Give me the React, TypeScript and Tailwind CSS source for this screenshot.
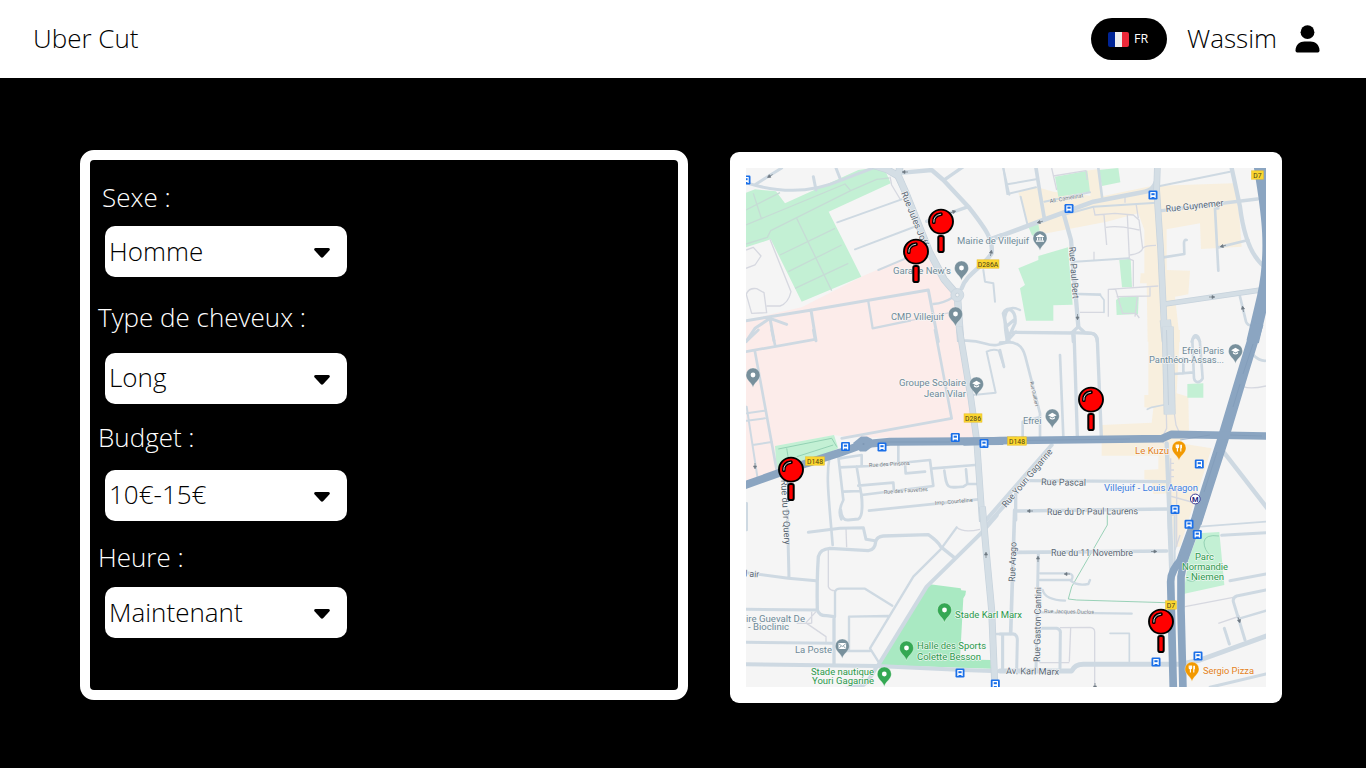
import React from "react";

type Road = [width: number, d: string];

interface Tile {
  x: number;
  y: number;
  beige?: string[];
  pink?: string[];
  green?: string[];
  paths?: string;
  lanes?: string;
  roads: Road[];
  main?: Road[];
  highway?: Road[];
}

// The map is drawn from six tiles, each one at three units to the pixel.
const tiles: Tile[] = [
  {
    x: 730,
    y: 150,
    pink: ["215,472 394,380 590,295 640,400 690,450 700,600 735,866 360,862 312,855 135,888 140,960 48,996 48,510"],
    green: ["48,128 75,118 138,124 165,160 385,60 430,54 465,60 482,100 296,185 394,380 215,455 122,268 48,292"],
    paths:
      "M48,225 L345,102 L362,122 L122,242 L112,262 L48,282 M70,130 L95,208 M48,180 L150,128 M200,205 L305,422 M150,315 L315,235 M175,365 L335,285 M195,415 L355,340 M362,122 L440,88 L478,84",
    lanes:
      "M48,300 L70,292 L93,318 L75,345 L48,355 M120,268 L183,425 Q175,460 150,468 L110,468 M48,435 Q55,412 80,416 L102,428 L110,488 L65,490 L48,430 M480,80 L485,105 L512,150 M495,80 L518,125 M540,512 L660,488",
    roads: [
      [9, "M75,104 L155,54 M48,98 C130,124 230,135 330,92 L440,50 M250,80 L258,120 M318,54 L332,90"],
      [13, "M520,68 L605,60 L640,90 L715,170 C770,240 790,270 785,310 C760,350 710,370 695,415"],
      [10, "M645,88 L700,50 M715,170 L590,214"],
      [6, "M560,228 L375,298 M515,148 L322,217 M445,360 L540,320 M785,262 L815,252 M760,360 L765,395 L790,400 L795,455 M820,54 L838,134"],
      [9, "M48,512 L245,480 L595,420 L625,575 M243,480 L258,572 M48,575 L75,535 L120,505 L132,572 M120,505 L170,523"],
      [7, "M415,455 L428,535 L540,512 M610,462 Q640,460 672,440 M870,480 C830,460 815,490 830,570"],
    ],
    main: [[22, "M430,46 L470,58 L505,78 L528,130 L598,305 L642,388 L682,435 L692,575 M505,78 L510,48"]],
  },
  {
    x: 1000,
    y: 150,
    beige: [
      "55,128 108,110 160,125 300,140 455,108 700,100 715,160 725,290 603,297 600,220 500,238 500,360 570,362 565,433 525,440 540,575 443,575 440,400 420,400 422,370 433,370 433,240 415,190 320,215 125,253 110,235 85,220",
      "255,62 295,58 305,145 275,150",
    ],
    green: [
      "165,80 262,62 270,125 175,140",
      "295,60 355,54 361,97 306,108",
      "85,230 115,222 120,250 112,262 96,256",
      "204,292 218,464 160,466 160,512 78,512 60,415 75,405 55,355 115,330 115,318",
      "358,330 392,326 396,412 366,412",
      "348,450 360,442 416,440 414,492 350,495",
    ],
    lanes:
      "M155,54 L170,120 M160,78 L258,62 L262,90 M280,170 L285,195 L345,190 L400,195 L417,210 L428,295 Q425,310 390,315 M312,195 L320,285 M382,195 L388,325 M318,232 C360,225 390,235 418,240 M408,160 L415,205 M428,295 Q435,286 468,286 M375,140 V158 M385,325 L400,332 V410 M325,500 V418 L475,408 M346,415 L368,490 L408,490 L418,504 M350,440 L450,438 V412 M412,440 L405,500 M282,305 V330 M240,487 H312",
    roads: [
      [11, "M108,54 L120,130 L133,205"],
      [6, "M10,54 L22,132 L108,112 M22,103 L108,88 M62,140 L82,222 M133,155 L270,127 M225,335 L385,325 M480,108 L690,65 M190,195 L280,170 L470,158"],
      [8, "M295,54 L307,148 M655,175 L645,175 L655,362 M655,292 L745,270 M490,322 L553,312 L552,280 Q552,268 560,270 M720,440 L738,515 Q742,527 757,527 M235,432 L300,434 M575,575 Q585,548 600,575"],
      [14, "M-10,262 L130,210 L280,155 L435,125 Q460,120 468,95"],
      [13, "M695,54 L720,170 C735,290 770,330 790,347 M192,195 L213,270 L235,530"],
      [10, "M485,182 L772,147 M20,575 L45,520 C50,480 20,465 10,490 L25,560 M18,530 L42,510 M38,547 L215,549 L235,530 L255,548 L275,550 Q290,552 292,575 M218,548 L220,575"],
      [5, "M300,434 L312,450 V487"],
    ],
    main: [
      [20, "M472,54 L470,120 L482,300 L492,515"],
      [34, "M496,510 L502,575"],
      [16, "M495,462 L782,420"],
    ],
    highway: [[38, "M779,40 C795,150 825,280 790,440 L758,575"]],
  },
  {
    x: 730,
    y: 330,
    green: ["135,348 312,315 325,355 230,400 200,420 140,420"],
    roads: [
      [8, "M48,65 L255,28 L250,0 M48,35 L85,0 M125,0 L135,45 M75,65 L140,420 M615,0 L665,265 L335,325"],
      [6, "M50,250 L105,242 M50,272 L105,265 M68,345 L125,336 M50,230 L82,440 M770,65 L797,188 L730,195 M770,65 Q790,55 806,62 L822,112"],
      [8, "M705,32 C760,30 770,50 800,45 L840,35"],
      [8, "M298,385 C288,440 296,500 308,645 M330,385 L395,375 V405 M325,380 L340,510 Q322,545 334,568 M380,410 L395,500 M330,412 L420,408 L600,390 L610,468 L395,495 M385,467 L490,458 L492,485 M340,485 L390,483 M505,345 V395 M525,400 L527,430 L585,425 M610,415 L735,405 M643,422 C650,475 650,475 700,470 L712,462 L708,418 M712,462 H740 M417,542 L745,508 M50,520 V600"],
      [12, "M775,580 L840,508"],
    ],
    main: [[20, "M687,-10 L722,200 L740,330 L757,575"]],
    highway: [[24, "M40,467 L230,400 L330,368 L400,343 L480,335 L820,333"]],
  },
  {
    x: 1000,
    y: 330,
    beige: [
      "445,0 540,0 530,190 565,200 567,300 540,340 635,355 540,650 522,650 510,490 460,492 455,450 433,448 433,420 475,418 475,377 305,377 305,285 455,278 460,235 433,232 433,195 445,195",
    ],
    green: ["562,162 610,160 610,203 562,203"],
    lanes:
      "M730,170 C750,178 780,172 798,168 M499,250 L500,295 L490,315 V340 M523,250 L528,285 L537,305 M510,498 L575,516 M512,385 V650 M530,470 V650 M512,400 h10 M512,420 h10 M512,440 h10 M515,540 h14 M515,555 h14",
    roads: [
      [10, "M222,5 L232,320 M215,8 L275,10 Q290,12 292,30 L304,320"],
      [8, "M0,38 C50,30 68,48 76,80 L120,250 V320 M0,60 L12,110 M48,5 L18,38 M180,75 L190,320 M68,320 V275 L118,262 M577,30 C580,10 597,10 600,40 L608,145 C600,160 585,160 582,145 Z M522,132 L580,127 M550,85 V130 M760,75 Q780,95 800,92"],
      [5, "M442,238 L455,232 L490,225"],
      [12, "M155,345 L-40,568"],
      [10, "M85,452 L500,455 M50,543 L500,537 M47,490 V570"],
      [13, "M670,365 L802,535 M500,340 L510,600"],
    ],
    main: [[36, "M503,-10 L509,253"]],
    highway: [
      [34, "M774,-20 L728,130 L668,330 L588,580"],
      [23, "M-110,336 L0,332 L485,326 L515,313 L802,318"],
    ],
  },
  {
    x: 730,
    y: 510,
    green: [],
    lanes:
      "M295,115 V230 Q300,242 315,242 M348,55 L350,112 M680,52 Q700,70 750,58 M230,340 L288,380 V400 M245,305 V340 M228,338 L258,305 M200,340 H245",
    roads: [
      [9, "M235,67 L330,55 L400,53 L408,88 L435,92 M332,0 Q335,32 355,30 L385,27 Q400,20 395,-40 M50,188 L175,205 L258,212 M172,0 L177,205 M48,298 L262,300 M48,397 L312,400"],
      [10, "M262,300 Q260,212 265,140 Q270,117 300,115 L415,122 Q435,120 437,95 Q440,80 460,78 L595,74 Q625,95 632,110 L672,142 M262,300 Q268,318 290,317 L312,320 V465"],
      [7, "M680,52 L632,118 L550,200 L420,415 L445,455 M345,423 L420,423 M357,420 V320 L475,318 M315,320 V245 Q318,236 330,236 L405,236 L487,287"],
      [12, "M48,463 L440,468 L700,480 L785,483 M800,16 L755,68 L590,230 L445,465 M440,470 Q415,515 400,525 L330,540"],
      [8, "M800,372 H855 M818,375 V480"],
    ],
    main: [[21, "M757,-10 L770,140 L785,300 L795,540"]],
  },
  {
    x: 1000,
    y: 510,
    green: ["595,70 658,66 673,225 550,252 555,220 565,150"],
    lanes: "M555,290 L700,262 M180,353 L270,352 Q284,354 284,365 V535 M212,355 L208,455 M118,458 H208 M540,75 L525,120 M655,340 L720,318",
    roads: [
      [9, "M0,372 L40,372 Q52,375 52,390 L50,480 M8,372 V480 M115,130 L108,480 M122,355 L170,355 Q183,358 181,370 L180,475 M798,240 L710,258 Q698,262 700,275 L735,390 M665,76 L798,68 M690,212 L798,192 M673,355 L688,402 M630,532 L798,492"],
      [11, "M44,0 L32,370 M50,127 L500,123"],
      [7, "M120,190 H205 Q222,192 216,207 L212,212 Q230,228 265,222 L270,210 M120,210 H215 M128,240 Q135,270 195,272 M115,307 L395,311 M720,325 L798,302"],
      [5, "M330,370 H388 V455 M600,50 L798,35"],
      [15, "M0,483 L215,483 Q225,463 250,463 L540,463 L600,450 L798,378 M508,0 L515,190"],
      [6, "M524,20 V190"],
    ],
    highway: [
      [34, "M604,-20 L590,30 L545,155"],
      [23, "M548,145 Q512,180 512,215 L520,540"],
      [23, "M556,130 L543,200 L543,300 L549,540"],
    ],
  },
];

type Label = [x: number, y: number, width: number, text: string, color: string, rotate?: number, size?: number];

const slate = "#6f8a98";
const street = "#5b6874";
const park = "#2c9a4c";
const food = "#e5821c";

const labels: Label[] = [
  [957, 244, 72, "Mairie de Villejuif", slate],
  [893, 274, 58, "Garage New's", slate],
  [891, 320, 53, "CMP Villejuif", slate],
  [899, 386, 67, "Groupe Scolaire", slate],
  [924, 397, 42, "Jean Vilar", slate],
  [1023, 424, 18.5, "Efrei", slate],
  [1182, 354, 42, "Efrei Paris", slate],
  [1149, 363, 75, "Panthéon-Assas...", slate],
  [746, 622, 59, "ire Guevalt De", slate],
  [748, 630, 41, "- Bioclinic", slate],
  [795, 653, 37, "La Poste", slate],
  [955, 618, 67, "Stade Karl Marx", park],
  [917, 649, 69, "Halle des Sports", park],
  [917, 660, 64, "Colette Besson", park],
  [811, 675, 63, "Stade nautique", park],
  [812, 684, 62, "Youri Gagarine", park],
  [1195, 560, 19, "Parc", park],
  [1182, 570, 46, "Normandie", park],
  [1186, 580, 38, "- Niemen", park],
  [1135, 454, 34, "Le Kuzu", food],
  [1203, 674, 51, "Sergio Pizza", food],
  [1104, 491, 94, "Villejuif - Louis Aragon", "#3d7de0"],
  [1166, 212, 58, "Rue Guynemer", street, -6],
  [1041, 485, 45, "Rue Pascal", street, 1],
  [1047, 515, 91, "Rue du Dr Paul Laurens", street, -0.5],
  [1051, 556, 82, "Rue du 11 Novembre", street],
  [1006, 674, 53, "Av. Karl Marx", street, 1],
  [745, 576.5, 14, "l air", street, 4],
  [1069, 247, 52, "Rue Paul Bert", street, 86],
  [901, 193, 58, "Rue Jules Joff", street, 68],
  [781, 480, 65, "Rue du Dr Query", street, 87],
  [1006, 508, 73, "Rue Youri Gagarine", street, -50],
  [1015, 582, 40, "Rue Arago", street, -88],
  [1040, 662, 75, "Rue Gaston Cantini", street, -89],
  [1050, 203, 34, "All. Camelinat", "#6c757d", -10, 5.5],
  [869, 467, 41, "Rue des Pinsons", "#6c757d", -3, 5.5],
  [884, 494, 44, "Rue des Fauvettes", "#6c757d", -4, 5.5],
  [935, 505, 38, "Imp. Courteline", "#6c757d", -5, 5.5],
  [1044, 613, 50, "Rue Jacques Duclos", "#6c757d", 1, 5.5],
  [1030, 382, 25, "Rue Guilbert", "#6c757d", 78, 5],
];

const shields: [number, number, number, string][] = [
  [988, 264, 22, "D286A"],
  [973, 418, 18, "D286"],
  [815, 461, 19, "D148"],
  [1017, 441, 19, "D148"],
  [1257.5, 175, 12, "D7"],
  [1171, 605, 11, "D7"],
];

const stops: [number, number][] = [
  [746, 180], [1069, 208.500], [1153, 195], [845.500, 446.500], [882, 447], [955.300, 437.500],
  [984, 443.500], [1199.300, 464], [1175, 509.500], [1189, 524.300], [1197.300, 534.500], [1156, 662],
  [1198, 656], [960, 673], [995.300, 684],
];

type Kind = "dot" | "school" | "museum" | "mail" | "food";

const places: [number, number, string, Kind][] = [
  [1040, 239, "#78909c", "museum"],
  [961.5, 269, "#78909c", "dot"],
  [955.5, 315, "#78909c", "dot"],
  [976.5, 385, "#78909c", "school"],
  [1052.3, 417, "#78909c", "school"],
  [1235.5, 352, "#78909c", "school"],
  [753, 376, "#78909c", "dot"],
  [842.3, 647, "#78909c", "mail"],
  [944.5, 611, "#34a853", "dot"],
  [906.5, 649, "#34a853", "dot"],
  [884.3, 675, "#34a853", "dot"],
  [1179, 449, "#f29900", "food"],
  [1192, 670, "#f29900", "food"],
];

const barbers: [number, number][] = [[941, 222], [916, 252], [1091, 400], [791, 470], [1161, 622]];

const arrows: [number, number, number][] = [
  [770, 176, 150], [905, 172, 180], [953, 212, -20], [991, 253, -80], [1040, 222, 165],
  [1223, 246, 165], [1212, 297, 0], [1243, 309, -100], [1077.5, 317, 90], [1030, 511, 180],
  [1154, 551.5, 0], [1038, 559, -90], [1067, 574, 180], [986, 555, -90], [755, 466, 90],
  [1239, 620, 70], [1095, 686, 90],
];

function PlaceGlyph({ kind }: { kind: Kind }) {
  if (kind === "school")
    return <path d="M0,-3.2 L4.3,-0.8 L0,1.6 L-4.3,-0.8 Z M-2.6,1 V2.6 Q0,4.4 2.6,2.6 V1 L0,2.5 Z" fill="#fff" />;
  if (kind === "museum")
    return <path d="M-4,-1.8 L0,-4 L4,-1.8 V-1 H-4 Z M-3,-0.4 h1.2 V2.2 H-3 Z M-.6,-.4 h1.2 V2.2 H-.6 Z M1.8,-.4 H3 V2.2 H1.8 Z M-4,2.6 H4 V3.8 H-4 Z" fill="#fff" />;
  if (kind === "mail")
    return (
      <g>
        <rect x="-3.800" y="-2.900" width="7.600" height="5.800" rx=".4" fill="#fff" />
        <path d="M-3.500,-2.300 L0,.5 L3.500,-2.300 M-3.400,2.500 L-1.200,0 M3.400,2.500 L1.200,0" fill="none" stroke="#78909c" strokeWidth=".8" />
      </g>
    );
  if (kind === "food")
    return <path d="M-2.8,-3.6 V-1.2 Q-2.8,0 -1.6,0 V3.6 M-.4,-3.6 V-1.2 Q-.4,0 -1.6,0 V-3.6 M1.8,3.6 V-3.2 M2.4,-3.2 V.2" fill="none" stroke="#fff" strokeWidth="1.1" />;
  return <circle r="2.4" fill="#fff" />;
}

function CityMap() {
  const at = (t: Tile) => `translate(${t.x} ${t.y}) scale(0.33333)`;
  return (
    <svg
      viewBox="746 168 520 519"
      className="block h-[519px] w-[520px] bg-[#f5f5f5] font-normal"
      fontFamily='Roboto, "Open Sans", sans-serif'
    >
      {tiles.map((t, i) => (
        <g key={i} transform={at(t)}>
          {t.pink?.map((p) => <polygon key={p} points={p} fill="#fcecea" />)}
          {t.beige?.map((p) => <polygon key={p} points={p} fill="#f8efde" />)}
        </g>
      ))}
      {tiles.map((t, i) => (
        <g key={i} transform={at(t)} fill="none" strokeLinejoin="round">
          {t.green?.map((p) => <polygon key={p} points={p} fill="#c3f0d4" />)}
          {t.paths && <path d={t.paths} stroke="#c6dcd5" strokeWidth="4" />}
          {t.lanes && <path d={t.lanes} stroke="#d6d8e0" strokeWidth="4" />}
        </g>
      ))}
      <g transform="translate(730 510) scale(0.33333)">
        <polygon points="590,230 600,223 692,235 694,241 708,242 706,255 700,265 690,448 782,450 783,476 450,465" fill="#a9e9c2" />
      </g>
      <g fill="none" stroke="#8fcdb0" strokeWidth=".9">
        <path d="M1107.300,510 V525 L1071.700,586.700 L1068.300,599 L1076.700,600 L1166.700,602.700" />
        <path d="M778.300,449 L831.700,438.300 L836.700,446.700 M786.700,448.300 L788.300,458.300 M796.700,456.700 L833.300,445" />
        <path d="M1219,536 Q1205,534 1204,542 Q1204,550 1211,556 M1187,580 Q1194,584 1199,576" />
      </g>
      {tiles.map((t, i) => (
        <g key={i} transform={at(t)} fill="none" stroke="#ced9e2" strokeLinejoin="round" strokeLinecap="round">
          {t.roads.map(([w, d]) => <path key={d} d={d} strokeWidth={w} />)}
        </g>
      ))}
      {tiles.map((t, i) => (
        <g key={i} transform={at(t)} fill="none" strokeLinejoin="round">
          {t.main?.map(([w, d]) => <path key={d} d={d} strokeWidth={w} stroke="#c6d2dc" />)}
          {t.main?.map(([w, d]) => <path key={d} d={d} strokeWidth={w - 4} stroke="#d4dee5" />)}
        </g>
      ))}
      <circle cx="957.300" cy="295" r="6.500" fill="#d4dee5" stroke="#c6d2dc" strokeWidth=".7" />
      <circle cx="957.300" cy="295" r="1.800" fill="#eef1f3" stroke="#c0cbd5" strokeWidth=".7" />
      <path d="M1166.500,330 L1168.500,405" fill="none" stroke="#bdcad5" strokeWidth=".7" />
      {tiles.map((t, i) => (
        <g key={i} transform={at(t)} fill="none" strokeLinejoin="round">
          {t.highway?.map(([w, d]) => <path key={d} d={d} strokeWidth={w} stroke="#8ba5c1" />)}
        </g>
      ))}
      <path d="M853,443 L861,436.500 H867 L872,439 L872,447 L866,451.500 H860 Z" fill="#8ba5c1" />
      <circle cx="863.500" cy="444" r="1" fill="#7d98b5" />
      <path
        d="M1253,344 L1243,374 M1240,384 L1233,407 M1217,452 L1204,492 M880,442 H950 M1020,440.500 L1130,439 M1180,440 L1210,435 M1230,435 L1262,436"
        fill="none"
        stroke="#7d99b7"
        strokeWidth=".6"
      />
      {arrows.map(([x, y, a], i) => (
        <path
          key={i}
          transform={`translate(${x} ${y}) rotate(${a})`}
          d="M-3,0 H1 M0,-1.500 L2.800,0 L0,1.500 Z"
          fill="#6d7882"
          stroke="#6d7882"
          strokeWidth=".7"
        />
      ))}
      {labels.map(([x, y, w, text, color, rotate = 0, size = 9.2]) => (
        <text
          key={text + y}
          transform={`translate(${x} ${y}) rotate(${rotate})`}
          fontSize={size}
          textLength={w}
          lengthAdjust="spacingAndGlyphs"
          fill={color}
          stroke="#f7f8f8"
          strokeOpacity=".85"
          strokeWidth={size < 6 ? 0.9 : 1.4}
          strokeLinejoin="round"
          paintOrder="stroke"
        >
          {text}
        </text>
      ))}
      {shields.map(([x, y, w, text]) => (
        <g key={`${x}-${y}`}>
          <rect x={x - w / 2} y={y - 4.2} width={w} height="8.400" fill="#fbd62f" stroke="#e6bd2c" strokeWidth=".5" />
          <text x={x} y={y + 2.5} fontSize="6.800" textAnchor="middle" fill="#4b4015">{text}</text>
        </g>
      ))}
      {stops.map(([x, y]) => (
        <g key={`${x}-${y}`} transform={`translate(${x} ${y})`}>
          <rect x="-4.500" y="-4.500" width="9" height="9" rx="1.200" fill="#1a6fe8" />
          <path d="M-2.700,-2.900 H2.700 V2.900 H1.500 V2 H-1.500 V2.900 H-2.700 Z" fill="#fff" />
          <rect x="-1.600" y="-1.800" width="3.200" height="2" fill="#1a6fe8" />
        </g>
      ))}
      {places.map(([x, y, color, kind]) => (
        <g key={`${x}-${y}`} transform={`translate(${x} ${y})`}>
          <path
            d="M0,11.500 C-1,6.500 -7,4.500 -7,-1 A7,7 0 0 1 7,-1 C7,4.500 1,6.500 0,11.500 Z"
            fill={color}
            stroke="#fff"
            strokeOpacity=".6"
            strokeWidth=".5"
          />
          <g transform="translate(0 -1)"><PlaceGlyph kind={kind} /></g>
        </g>
      ))}
      <circle cx="1195.300" cy="499" r="4.900" fill="#fff" stroke="#3b3b94" strokeWidth="1" />
      <text x="1195.300" y="501.600" fontSize="7.500" fontWeight="700" textAnchor="middle" fill="#27277f">M</text>
      {barbers.map(([x, y]) => (
        <g key={`${x}-${y}`} transform={`translate(${x} ${y})`} stroke="#000">
          <rect x="-2.700" y="14" width="5.400" height="16" rx="1.800" fill="#f00" strokeWidth="2" />
          <circle cy="-.4" r="12" fill="#f00" strokeWidth="1.900" />
          <path d="M-7.200,.3 Q-7.800,-7 0,-7.900" fill="none" strokeWidth="3.600" strokeLinecap="round" />
          <path d="M-7.200,.1 Q-7.600,-6.800 -.3,-7.800" fill="none" stroke="#eee" strokeWidth=".9" strokeLinecap="round" />
        </g>
      ))}
    </svg>
  );
}

function Select({ value, valueClass }: { value: string; valueClass: string }) {
  return (
    <button className="flex h-[51px] w-[242px] items-center justify-between rounded-[10px] bg-white pr-[17px] pb-px pl-[4px] text-[26px] leading-[36px] text-black">
      <span className={valueClass}>{value}</span>
      <svg viewBox="0 0 16 10" className="mt-[4px] h-[10px] w-[16px]">
        <path d="M1.500,0 H14.500 Q16.800,.6 15.300,2.500 L9.300,9 Q8,10.300 6.700,9 L.7,2.500 Q-.8,.6 1.500,0 Z" />
      </svg>
    </button>
  );
}

const fields = [
  { label: "Sexe :", value: "Homme", labelClass: "pl-[12px]", selectClass: "pt-[11px]", valueClass: "pb-0" },
  { label: "Type de cheveux :", value: "Long", labelClass: "pl-[8px]", selectClass: "pt-[17.5px]", valueClass: "pb-[2px]" },
  { label: "Budget :", value: "10€-15€", labelClass: "pl-[8px]", selectClass: "pt-[14.5px]", valueClass: "pb-[2px]" },
  { label: "Heure :", value: "Maintenant", labelClass: "pl-[8px]", selectClass: "pt-[12px]", valueClass: "pb-0" },
];

export default function App() {
  return (
    <div className="h-[768px] w-[1366px] overflow-hidden bg-black font-['Open_Sans',sans-serif] text-[26px] leading-[36px] font-light">
      <header className="flex h-[78px] items-center justify-between bg-white pr-[46px] pl-[33px] text-black">
        <span className="pb-[2px]">Uber Cut</span>
        <div className="flex items-center">
          <button className="flex h-[42px] w-[76px] items-center gap-[5px] rounded-[21px] bg-black pl-[17px] text-[12.5px] leading-[18px] font-normal text-white">
            <span className="flex h-[15px] w-[21px] overflow-hidden rounded-[2px]">
              <span className="w-[7px] bg-[#002495]" />
              <span className="w-[7px] bg-[#eee]" />
              <span className="w-[7px] bg-[#ed2939]" />
            </span>
            FR
          </button>
          <span className="ml-[20px] w-[89px] pb-[2px] whitespace-nowrap">Wassim</span>
          <svg viewBox="0 0 25 28" className="ml-[19px] h-[28px] w-[25px]">
            <circle cx="12.500" cy="7.200" r="6.900" />
            <path d="M.5,25.500 C.5,19.500 5,16.400 9.500,16.400 H15.500 C20,16.400 24.500,19.500 24.500,25.500 Q24.500,27.500 22.800,27.500 H2.200 Q.5,27.500 .5,25.500 Z" />
          </svg>
        </div>
      </header>
      <main className="flex items-start gap-[42px] pt-[72px] pl-[80px]">
        <section className="h-[550px] w-[608px] rounded-[14px] border-[10px] border-white pt-[19px]">
          {fields.map((f) => (
            <div key={f.label} className="h-[120px]">
              <div className={`text-white ${f.labelClass}`}>{f.label}</div>
              <div className={`pl-[15px] ${f.selectClass}`}>
                <Select value={f.value} valueClass={f.valueClass} />
              </div>
            </div>
          ))}
        </section>
        <section className="mt-[2px] h-[551px] w-[552px] rounded-[9px] bg-white p-[16px]">
          <CityMap />
        </section>
      </main>
    </div>
  );
}
